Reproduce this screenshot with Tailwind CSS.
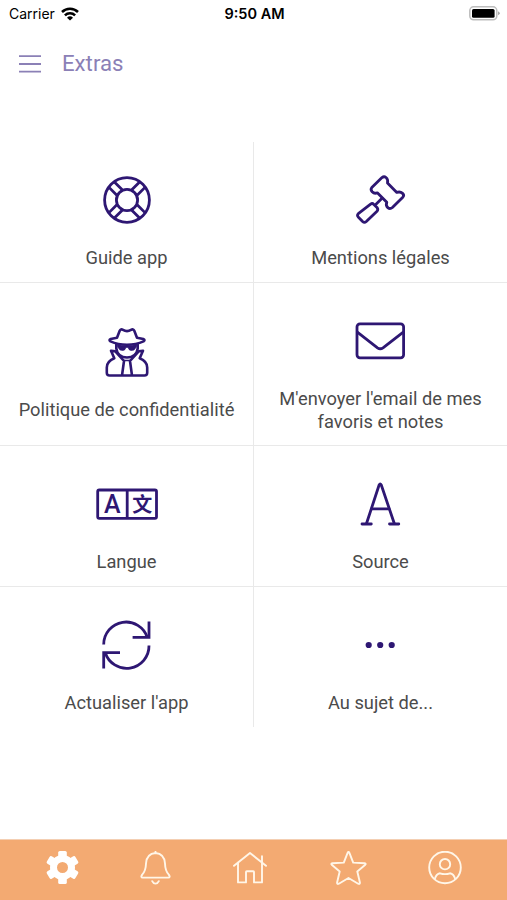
<!DOCTYPE html>
<html lang="fr">
<head>
  <meta charset="UTF-8" />
  <meta name="viewport" content="width=device-width, initial-scale=1.0" />
  <title>Extras</title>
  <script src="https://cdn.jsdelivr.net/npm/@tailwindcss/browser@4"></script>
</head>
<body class="bg-white">
  <div class="flex flex-col w-[507px] h-[900px] overflow-hidden bg-white font-['Roboto',sans-serif]">

    <!-- Status bar -->
    <div class="grid grid-cols-3 items-center h-[27px] pl-[9px] pr-[7px] text-black font-['Inter',sans-serif]">
      <div class="flex items-center gap-[6px]">
        <span class="text-[14px]">Carrier</span>
        <svg class="w-[18px] h-[14px]" viewBox="0 0 18 14" fill="none" stroke="currentColor" stroke-width="2.5">
          <path d="M1 5a11.3 11.3 0 0 1 16 0" />
          <path d="M3.9 8.3a7.2 7.2 0 0 1 10.2 0" />
          <path d="M9 13.5L6 10.7a4.3 4.3 0 0 1 6 0z" fill="currentColor" stroke="none" />
        </svg>
      </div>
      <span class="text-center text-[14.5px] font-semibold">9:50 AM</span>
      <svg class="justify-self-end w-[31px] h-[15px]" viewBox="0 0 31 15">
        <rect x="0.8" y="0.8" width="27" height="13" rx="3.8" fill="#fff" stroke="#bdbdbd" stroke-width="1.5" />
        <rect x="3" y="3" width="22.6" height="8.8" rx="1.6" fill="#000" />
        <path d="M29 5.3q1.8.8 1.8 2t-1.8 2z" fill="#a8a8a8" />
      </svg>
    </div>

    <!-- Header -->
    <div class="flex items-center gap-[21px] h-[73px] pl-[19px] text-[#8b80b6]">
      <svg class="w-[22px] h-[18px]" viewBox="0 0 22 18" stroke="currentColor" stroke-width="1.8">
        <path d="M0 1.2h22M0 9h22M0 16.6h22" />
      </svg>
      <h1 class="text-[22.2px]">Extras</h1>
    </div>

    <!-- Menu -->
    <div class="grid grid-cols-[254px_253px] grid-rows-[141px_163px_141px_140px] mt-[42px] text-[18.3px] leading-[23.4px] text-[#4b4b4b] text-center">
      <div class="flex flex-col items-center justify-center gap-4 pt-4 border-r border-b border-[#e9e9e9]">
        <svg class="w-[60px] h-[60px] text-[#2e1773]" viewBox="0 0 60 60" fill="none" stroke="currentColor" stroke-width="2.8">
          <circle cx="30" cy="30" r="22.4" />
          <circle cx="30" cy="30" r="10.6" />
          <path d="M39.5 26.2H52M39.5 33.8H52" transform="rotate(45 30 30)" />
          <path d="M39.5 26.2H52M39.5 33.8H52" transform="rotate(135 30 30)" />
          <path d="M39.5 26.2H52M39.5 33.8H52" transform="rotate(225 30 30)" />
          <path d="M39.5 26.2H52M39.5 33.8H52" transform="rotate(315 30 30)" />
        </svg>
        <span>Guide app</span>
      </div>

      <div class="flex flex-col items-center justify-center gap-4 pt-4 border-b border-[#e9e9e9]">
        <svg class="w-[60px] h-[60px] mr-0.5 text-[#2e1773]" viewBox="0 0 60 60" fill="none" stroke="currentColor" stroke-width="2.8" stroke-linejoin="round" stroke-linecap="round">
          <path d="M21.8 17.5L32 7.6Q34 5.9 36 7.5Q38.3 9.3 37.5 13L46.8 22.4Q50.3 21.3 52.6 23.4Q54.6 25.2 52.8 27.2L42.4 37.5Q40 39.6 37.8 37.6Q35.5 35.6 36.8 32.3L27.3 22.8Q24.3 24 22.2 21.8Q20.2 19.6 21.8 17.5Z" />
          <path d="M32 28.2L26 34.2" />
          <path d="M20.6 34.2Q22.2 32.8 23.9 34.4L27 37.5Q28.6 39.4 27 41.2L16.3 51.5Q14.4 53.2 12.6 51.5L8.2 47Q6.8 45.2 8.3 43.6Z" />
        </svg>
        <span>Mentions légales</span>
      </div>

      <div class="flex flex-col items-center justify-center gap-4 pt-4 border-r border-b border-[#e9e9e9]">
        <svg class="w-[60px] h-[60px] text-[#2e1773]" viewBox="0 -1 60 60" fill="none" stroke="currentColor" stroke-width="2.6" stroke-linejoin="round" stroke-linecap="round">
          <path d="M20 14.8L22.7 7.8Q23.7 5.5 26 6.9Q30 9.3 34 6.9Q36.3 5.5 37.3 7.8L40 14.8L46.3 16Q48.6 17 46.5 18.4Q39 21.7 30 21.7T13.5 18.4Q11.4 17 13.7 16Z" />
          <path d="M19.3 21.5V25.5Q20.5 34.5 30 34.5T40.7 25.5V21.5" />
          <path d="M19.8 21.5Q30 23.5 40.2 21.5L39 24.6Q37.5 28 34 27.5Q31.5 27 31 24.5H29Q28.5 27 26 27.5Q22.5 28 21 24.6Z" fill="currentColor" stroke-width="0.6" />
          <path d="M25 52.5L27 38L18.3 28.3L14 27.7L17.3 35.3Q9.8 38.4 9.8 44.5V49.7Q9.8 52.5 12.6 52.5H47.4Q50.2 52.5 50.2 49.7V44.5Q50.2 38.4 42.7 35.3L46 27.7L41.7 28.3L33 38L35 52.5" />
          <path d="M27 37.5H33" stroke-width="1.6" />
        </svg>
        <span>Politique de confidentialité</span>
      </div>

      <div class="flex flex-col items-center justify-center gap-4 pt-4 border-b border-[#e9e9e9]">
        <svg class="w-[60px] h-[60px] mr-0.5 text-[#2e1773]" viewBox="0 0 60 60" fill="none" stroke="currentColor" stroke-width="2.8" stroke-linejoin="round">
          <rect x="7" y="12.8" width="46.6" height="34" rx="3" />
          <path d="M7 20.8L27.5 36.8Q30.2 38.8 33 36.8L53.6 20.8" />
        </svg>
        <span>M'envoyer l'email de mes<br />favoris et notes</span>
      </div>

      <div class="flex flex-col items-center justify-center gap-4 pt-4 border-r border-b border-[#e9e9e9]">
        <svg class="w-[64px] h-[60px] text-[#2e1773]" viewBox="0 0 64 60" fill="none" stroke="currentColor" stroke-width="2.8">
          <rect x="2.7" y="16" width="58.8" height="28.4" rx="1.6" />
          <path d="M32.2 16V44.4" />
          <g fill="currentColor" stroke="none" text-anchor="middle">
            <text x="17.3" y="39" class="text-[25px] font-medium font-['Roboto',sans-serif]">A</text>
            <text x="47.3" y="38" class="text-[20px] font-bold font-['Noto_Sans_CJK_SC',sans-serif]">文</text>
          </g>
        </svg>
        <span>Langue</span>
      </div>

      <div class="flex flex-col items-center justify-center gap-4 pt-4 border-b border-[#e9e9e9]">
        <svg class="w-[60px] h-[60px] mr-0.5 text-[#2e1773]" viewBox="0 0 60 60" fill="none" stroke="currentColor" stroke-width="2.8" stroke-linejoin="round" stroke-linecap="round">
          <path d="M16.5 49.5L29.2 10.8Q30.2 8.8 31.2 10.8L44.3 49.5" />
          <path d="M21.6 34.8H39" />
          <path d="M12 50H21.3M39.5 50H48.8" />
        </svg>
        <span>Source</span>
      </div>

      <div class="flex flex-col items-center justify-center gap-4 pt-4 border-r border-[#e9e9e9]">
        <svg class="w-[60px] h-[60px] mr-0.5 text-[#2e1773]" viewBox="0 0 60 60" fill="none" stroke="currentColor" stroke-width="2.8">
          <path d="M7.7 29.5A22.4 22.4 0 0 1 51.4 22.5" />
          <path d="M53 6.6V22.4H36.6" />
          <path d="M53 30.5A22.4 22.4 0 0 1 9.2 37.5" />
          <path d="M7.7 53.4V37.6H24" />
        </svg>
        <span>Actualiser l'app</span>
      </div>

      <div class="flex flex-col items-center justify-center gap-4 pt-4">
        <svg class="w-[60px] h-[60px] mr-0.5 text-[#2e1773]" viewBox="0 0 60 60" fill="currentColor">
          <circle cx="18.7" cy="30" r="3.1" />
          <circle cx="30.2" cy="30" r="3.1" />
          <circle cx="41.7" cy="30" r="3.1" />
        </svg>
        <span>Au sujet de...</span>
      </div>
    </div>

    <!-- Tab bar -->
    <div class="flex justify-between items-start h-[61px] mt-auto pt-[11px] pl-[46px] pr-[45px] bg-[#f3aa72] border-t border-[#f4cfb3] text-white">
      <svg class="w-[33px] h-[34px]" viewBox="0 0 33 34" fill="currentColor">
        <circle cx="16.5" cy="16.5" r="9" fill="none" stroke="currentColor" stroke-width="7" />
        <rect x="12.2" y="0" width="8.6" height="8" rx="1.6" />
        <rect x="12.2" y="0" width="8.6" height="8" rx="1.6" transform="rotate(60 16.5 16.5)" />
        <rect x="12.2" y="0" width="8.6" height="8" rx="1.6" transform="rotate(120 16.5 16.5)" />
        <rect x="12.2" y="0" width="8.6" height="8" rx="1.6" transform="rotate(180 16.5 16.5)" />
        <rect x="12.2" y="0" width="8.6" height="8" rx="1.6" transform="rotate(240 16.5 16.5)" />
        <rect x="12.2" y="0" width="8.6" height="8" rx="1.6" transform="rotate(300 16.5 16.5)" />
      </svg>
      <svg class="w-[31px] h-[34px]" viewBox="0 0 31 34" fill="none" stroke="#fff6e8" stroke-width="1.9" stroke-linejoin="round" stroke-linecap="round">
        <path d="M15.5 2Q6.6 2.8 6 12.5Q5.8 20 2.2 23.6Q.2 26.6 2.8 26.6H28.2Q30.8 26.6 28.8 23.6Q25.2 20 25 12.5Q24.4 2.8 15.5 2ZM15.5 2V.8" />
        <path d="M12.2 30.2Q13.3 32.6 15.5 32.6T18.8 30.2" />
      </svg>
      <svg class="w-[36px] h-[34px]" viewBox="0 0 36 34" fill="none" stroke="#fff6e8" stroke-width="1.9" stroke-linejoin="round" stroke-linecap="round">
        <path d="M1 14.8L17 2L33 14.8" />
        <path d="M5 11.8V31.4H13V21Q13 20.2 13.8 20.2H20.2Q21 20.2 21 21V31.4H29V5.2" />
      </svg>
      <svg class="w-[37px] h-[34px]" viewBox="0 0 37 34" fill="none" stroke="#fff6e8" stroke-width="1.9" stroke-linejoin="round">
        <path d="M17.6 1.9Q18.5-.2 19.4 1.9L23.2 11.6L34.6 12.3Q36.6 12.7 35 14.1L27.3 20.5L29.9 31.5Q30 33.5 28.2 32.7L18.5 27L8.8 32.7Q7 33.5 7.1 31.5L9.7 20.5L2 14.1Q.4 12.7 2.4 12.3L13.8 11.6Z" />
      </svg>
      <svg class="w-[34px] h-[34px]" viewBox="0 0 34 34" fill="none" stroke="#fff6e8" stroke-width="1.9">
        <circle cx="17" cy="16.5" r="15.8" />
        <circle cx="17" cy="13.2" r="5.2" />
        <path d="M6.7 28.3Q8.2 22.8 12 22.3Q17 24 22 22.3Q25.8 22.8 27.3 28.3" />
      </svg>
    </div>
  </div>
</body>
</html>
